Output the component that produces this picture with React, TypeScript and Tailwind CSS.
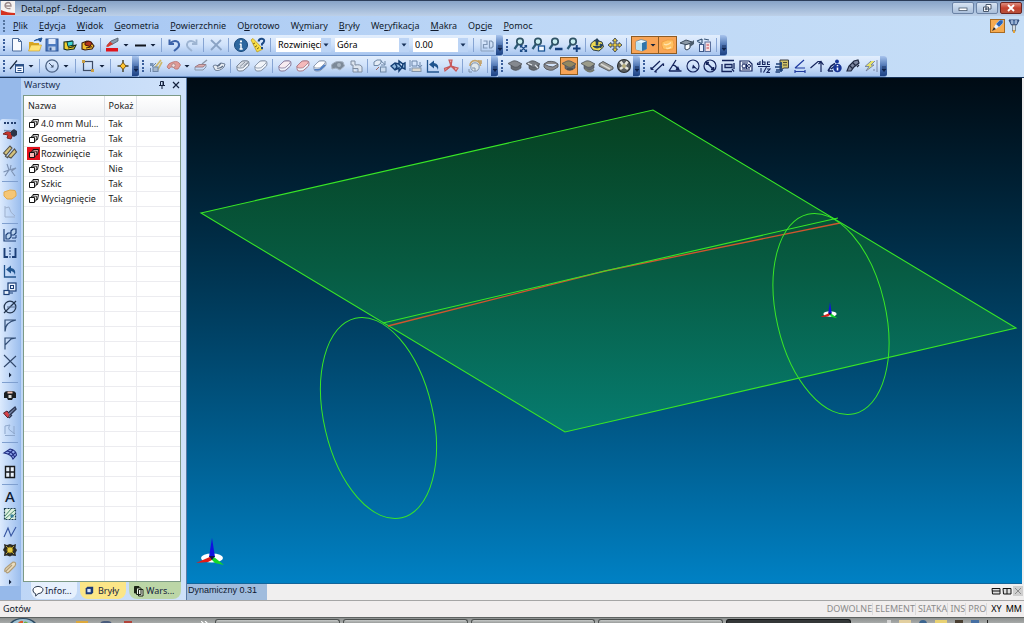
import React from 'react';

type IconDef = React.ReactNode;

const navy = '#1c3f77';
const ink = '#15245c';

const lens = (
  <>
    <path d="M6 7 L2.5 12" stroke="#2b5b78" strokeWidth="2.2" />
    <circle cx="8" cy="4.6" r="3.2" fill="#c9eef0" stroke="#2f5265" strokeWidth="1.7" />
  </>
);

const cap = (fill: string) => (
  <>
    <path d="M4 7 V10.5 Q9 14.5 14 10 V7 Z" fill="#666a70" stroke="#464b52" strokeWidth=".6" />
    <path d="M1 5.5 L6 3 Q8 2.5 10 3.3 L15 6 L10.5 9 Q9 9.6 7 9 Z" fill={fill} stroke="#50555c" strokeWidth=".8" />
  </>
);

const slab = (fill: string, edge: string) => (
  <>
    <path d="M2 8 L6 4 Q7 3 9 3 H12 Q14.5 3 14 6 L13.5 8 L9 12 Q8 13 6 13 H4 Q2 13 2 10.5 Z" fill="#eef3fa" stroke={edge} />
    <path d="M2 8 L6 4 Q7 3 9 3 H12 Q14.5 3 13 5 L9 9 Q8 10 6 10 H4 Q1.5 10 2 8 Z" fill={fill} stroke={edge} strokeWidth=".8" />
  </>
);

const icons: Record<string, IconDef> = {
  new: <path d="M3.5 1.5 H9.5 L12.5 4.5 V14 H3.5 Z M9.5 1.5 V4.5 H12.5" fill="#f8fbff" stroke="#4d6d9c" />,
  open: (
    <>
      <path d="M2 5 H6 L7 6 H12 V13 H2 Z" fill="#d9a520" />
      <path d="M4 8 H14.5 L12.5 14 H1.5 Z" fill="#ffe377" stroke="#c99a1d" strokeWidth=".6" />
      <path d="M7 4 Q10 1 13 3 M11 2 L15 1 L13.5 5 Z" fill="#24579c" stroke="#24579c" />
    </>
  ),
  save: (
    <>
      <rect x="2" y="2" width="12" height="12" fill="#4c7bc0" stroke="#2c5596" />
      <rect x="4.5" y="2" width="7" height="5" fill="#dfeafb" />
      <rect x="4.5" y="9.5" width="7" height="4" fill="#c2d4ec" />
      <rect x="5.5" y="10.5" width="2" height="3" fill="#2c5596" />
    </>
  ),
  insertA: (
    <>
      <path d="M2 5 L10 4 V9 L14 8 L12 12 L5 13 L2 12 Z" fill="#f3cf2c" stroke="#142c1c" strokeWidth="1.1" />
      <path d="M5 5 L11 4 V8 L6 9.5 Z" fill="#42d7d3" stroke="#0c3a33" />
      <path d="M6 11 L12 9.7" stroke="#142c1c" />
    </>
  ),
  insertB: (
    <>
      <path d="M2 6 L7 4 L11 5 L14 9 L12 12 L5 13 L2 12 Z" fill="#f3bd2c" stroke="#3a1c10" strokeWidth="1.1" />
      <path d="M5 5.5 L9 4 L12 6 L10 9.5 L5 8 Z" fill="#b3351d" stroke="#4a130b" />
      <path d="M6 11 L12 9.7" stroke="#3a1c10" />
    </>
  ),
  pen: (
    <>
      <path d="M3 8.5 L7 4 L14 1 V4 L8 7.5 Z" fill="#8a9cb0" stroke="#4f5c6b" strokeWidth=".8" />
      <path d="M2 9.5 L6 4.5 L9 7 L4 10 Z" fill="#d63d31" />
      <rect x="2" y="11" width="12" height="3.5" fill="#e0131c" />
    </>
  ),
  line: <path d="M3 8.5 H14" stroke="#10151c" strokeWidth="1.8" />,
  undo: <path d="M3.5 2.5 V7 H8 M4 6.5 Q8 2.5 12 5 Q14.5 8.5 11 11.5 L8 14" fill="none" stroke="#3c62a8" strokeWidth="2" />,
  redo: <path d="M12.5 2.5 V7 H8 M12 6.5 Q8 2.5 4 5 Q1.5 8.5 5 11.5 L8 14" fill="none" stroke="#9db4d2" strokeWidth="1.8" />,
  cross: <path d="M3 3 L13.5 13 M13 3 L3 13" stroke="#8ba3c4" strokeWidth="1.8" />,
  info: (
    <>
      <circle cx="8" cy="8" r="6.5" fill="#2d679f" stroke="#17477a" />
      <path d="M8 7 V12 M6.7 7.2 H8.5 M6.5 12 H9.7" stroke="#fff" strokeWidth="1.5" />
      <circle cx="8" cy="4.4" r="1.1" fill="#fff" />
    </>
  ),
  help: (
    <>
      <path d="M1 3 L3 1.5 L13 12 L7 15 Z" fill="#f8de45" stroke="#b89519" strokeWidth=".7" />
      <path d="M3 7 L5 6 M5 10 L7 8.6 M7 12 L9 10.5" stroke="#7c6512" />
      <path d="M8.5 4.5 Q9 1.5 12 1.8 Q15.5 2.5 13.5 5.5 L12 7 V8.5 M12 10 V12" fill="none" stroke="#1c4a85" strokeWidth="2" />
    </>
  ),
  twoD: (
    <>
      <path d="M2 2 V14 H15" fill="none" stroke="#8aa0bd" />
      <path d="M4.5 4 H8 V7.5 H4.5 V11 H8.5 M10.5 4 V11 H12.5 L14 9.5 V5.5 L12.5 4 Z" fill="none" stroke="#7f96b5" strokeWidth="1.2" />
    </>
  ),
  zoomFit: <>{lens}<path d="M9 9 L14 14 M14 9 L9 14 M8.5 10.5 V8.5 H10.5 M12.5 8.5 H14.5 V10.5 M14.5 12.5 V14.5 H12.5 M10.5 14.5 H8.5 V12.5" fill="none" stroke="#1d4c86" strokeWidth="1.2" /></>,
  zoomBox: <>{lens}<rect x="8.5" y="9" width="6" height="5" fill="#f5faff" stroke="#1d5696" strokeWidth="1.3" /></>,
  zoomOut: <>{lens}<path d="M8 12 H15.5" stroke="#153f7c" strokeWidth="2.6" /></>,
  zoomIn: <>{lens}<path d="M8 11.5 H15.5 M11.75 8 V15" stroke="#153f7c" strokeWidth="2" /></>,
  orbit: (
    <>
      <path d="M2 6.5 L6 3 L13 5 L14.5 10 L10 14 L4 13 L1.5 9.5 Z" fill="#ecd751" stroke="#2e3f48" />
      <path d="M8 1 L11 4.5 H9.3 V8.5 H6.7 V4.5 H5 Z" fill="#27435c" />
      <path d="M4 9 Q8 13 12 9 M11 7 L14 8 L11.5 11 Z" fill="#27435c" stroke="#27435c" />
    </>
  ),
  pan: (
    <path d="M8 1 L10.5 4 H9 V7 H12 V5.5 L15 8 L12 10.5 V9 H9 V12 H10.5 L8 15 L5.5 12 H7 V9 H4 V10.5 L1 8 L4 5.5 V7 H7 V4 H5.5 Z" fill="#e8c93f" stroke="#37435a" strokeWidth=".9" />
  ),
  cube: (
    <>
      <path d="M3 4.5 L8 2.5 L13.5 4 V12 L9 14 L3 12.5 Z" fill="#e9f8ff" stroke="#537d99" strokeWidth=".7" />
      <path d="M9 6 L13.5 4.2 V12 L9 14 Z" fill="#2f75aa" />
      <path d="M3 4.5 L9 6 V14 L3 12.5 Z" fill="#b9e2f5" />
    </>
  ),
  shade: (
    <>
      <path d="M2 5 Q7 2 13 3 Q15 8 13 12 Q7 14 3 12 Q1 8 2 5 Z" fill="#ffc061" stroke="#ef9f42" />
      <path d="M4 7 Q7 9 11 5.5 M6 11 Q9 12 11 10" stroke="#ffe3ab" strokeWidth="1.3" fill="none" />
    </>
  ),
  viewA: (
    <>
      <path d="M1 6 L7 3 L13 5 L8 8 Z" fill="#8c99a6" stroke="#3c4b5c" />
      <path d="M6 8 L11 6.5 V11 L8 13 L6 12 Z" fill="#fbfdff" stroke="#35465a" />
      <path d="M11 6.5 L15 3 V7 L11 10 Z" fill="#4b5b6c" />
    </>
  ),
  viewB: (
    <>
      <path d="M1 4 L6 2 M1 4 L6 7 M8 2 L13 3 M6 2 V6" stroke="#395678" strokeWidth="1.2" />
      <rect x="3.5" y="7.5" width="4" height="7" fill="#e7efff" stroke="#3d5786" />
      <rect x="9" y="5" width="5.5" height="9.5" fill="#f4dfe3" stroke="#5a6f9b" />
      <path d="M10.5 8 H13 M10.5 11 H13" stroke="#c8424a" />
    </>
  ),
  sketch: (
    <>
      <path d="M1 11 L8 2.5" stroke="#1d2c42" strokeWidth="1.2" />
      <rect x="6.5" y="6.5" width="8" height="8" fill="#f3f8ff" stroke="#2d5288" />
      <path d="M6.5 7.5 H14.5" stroke="#2d5288" strokeWidth="2" />
      <path d="M8.5 10.5 H12.5 M8.5 12.5 H12.5" stroke="#2d5288" />
    </>
  ),
  circle: (
    <>
      <circle cx="8" cy="8" r="6.2" fill="none" stroke="#4b6284" strokeWidth="1.3" />
      <path d="M8 8 L5 5" stroke="#3d4f6b" /><path d="M6.5 9.5 L9.5 6.5 V9.5 Z" fill="#3d4f6b" />
    </>
  ),
  rect: (
    <>
      <rect x="3.5" y="3.5" width="9" height="9" fill="none" stroke="#3d4c66" strokeWidth="1.2" />
      <rect x="2" y="2" width="3" height="3" fill="#c9a047" /><rect x="11" y="11" width="3" height="3" fill="#c9a047" />
    </>
  ),
  point: (
    <>
      <path d="M8 2 V14 M2.5 8 H13.5" stroke="#3f3e28" strokeWidth="1.4" />
      <path d="M8 4.5 L11 8 L8 11.5 L5 8 Z" fill="#ffc42e" stroke="#7e5812" />
    </>
  ),
  surfA: (
    <>
      <path d="M5 12 L13 2 M9 13 L14 4" stroke="#cdb96b" strokeWidth="1.6" />
      <rect x="2" y="5" width="3.5" height="3" fill="#7893b5" /><rect x="5" y="9" width="5" height="4.5" fill="#a4b6cc" stroke="#6f88a8" />
      <path d="M2.5 14 V10 M4 9 L8 5" stroke="#6f88a8" />
    </>
  ),
  surfB: (
    <>
      <path d="M1 9 Q2 5 7 4 Q12 2 14.5 7 L12 11 Q9 12 7 9 Q4 8 3 11 Z" fill="#e09a96" stroke="#b5716f" strokeWidth=".8" />
      <circle cx="7.5" cy="7.5" r="1.8" fill="#f6dfdc" stroke="#aa8a8d" />
    </>
  ),
  surfC: <><path d="M2 9 L6 6.5 H13 L10 9 Z" fill="#dcaeae" stroke="#a07c84" /><path d="M9 6 L14 2" stroke="#8b97a8" strokeWidth="1.5" /><path d="M2 9 V12 H10 L13 9 V6.5" fill="none" stroke="#8b97a8" /></>,
  surfD: <><path d="M2 8 L4 12 Q8 14 13 9 L14 6 L10 5 L8 8 L4 7 Z" fill="#e8edf3" stroke="#6e7f97" /><path d="M6 8.5 L10 5 M6 10 Q9 11 12 8" stroke="#5e6f87" strokeWidth="1.2" fill="none" /></>,
  solidA: <>{slab('#d9dee6', '#75808f')}<path d="M5 8.5 L10 4 M8.5 8 L12.5 4.5" stroke="#75808f" strokeWidth=".8" /></>,
  solidB: slab('#f1f4f9', '#8390a4'),
  solidC: slab('#f7ecf0', '#86789a'),
  solidD: slab('#f4b9ba', '#a77785'),
  solidE: <>{slab('#fdfdff', '#8492a8')}<path d="M2.5 11.5 Q6 12.5 8.5 11 L13 7" fill="none" stroke="#4c7cc4" strokeWidth="1.8" /></>,
  solidF: <><path d="M1.5 7 Q5 2 13 4 L14.5 8 L10 12 L6 10 L2 11 Z" fill="#7c8998" stroke="#a3afbf" /><circle cx="9" cy="7" r="2" fill="#a8b4c1" /></>,
  solidG: <path d="M3 3 H7 V7 Q13 6 14 9 V14 H10 V10.5 H5 V7 H3 Z M5 10 V14 H10" fill="#dde5ef" stroke="#7e8ca0" />,
  moveA: <><path d="M2 4 L5 2 H9 V5 L6 7.5 H2 Z" fill="#e4ecf6" stroke="#6f88a6" /><path d="M9 3 L13 6.5 M13 3 V7 H9" fill="none" stroke="#6f88a6" /><rect x="8.5" y="9" width="5.5" height="5" fill="#cbdcf0" stroke="#6f88a6" /><path d="M4 12 L7 9" stroke="#a4685c" /></>,
  moveB: <path d="M1 8 L5 5 L9 6 V3 L13 6 L15 5 V11 L12 9.5 L9 13 V10 L5 12 Z M5 5 L7 9 L5 12 M9 6 L12 9.5 L13 6" fill="#8fb8df" stroke="#133d72" strokeWidth="1.4" />,
  moveC: <><path d="M3 2 V9 M5 3 H10 V8 H5 Z" fill="none" stroke="#6c87aa" /><path d="M3 13 V10 M13 4 V9 M11 7 L13 9.5 L15 7" fill="none" stroke="#6c87aa" /><rect x="5" y="10" width="9" height="3.5" fill="#ddd8cd" stroke="#8294aa" /></>,
  rotate: <><path d="M2.5 2 V14 H14" fill="none" stroke="#23558f" strokeWidth="1.3" /><path d="M4 6.5 L9 2.5 V5 Q14.5 6 13 12 Q12 8.5 9 8 V10.5 Z" fill="#20558f" /></>,
  axis: (
    <>
      <path d="M8 8 L6 2 L9 2 Z M8 8 L2 13 L1.5 10.5 Z M8 8 L15 10 L13 13 Z" fill="#efaeac" stroke="#c65a5c" strokeWidth="1.2" />
      <path d="M8 8 L8 4 M8 8 L4 11 M8 8 L12 10.5" stroke="#c65a5c" strokeWidth="1.5" />
    </>
  ),
  rotCopy: <><path d="M3 8 Q3 3 8 2.5 Q13 3 13.5 8 M11 3 H14 V6" fill="none" stroke="#c4a36c" strokeWidth="1.7" /><circle cx="8" cy="9" r="4.2" fill="#e1e8ec" stroke="#7d90aa" /><path d="M5 10 H8 V13 M2 11 V14 H5" fill="none" stroke="#7d90aa" /></>,
  capA: cap('#85898f'),
  capB: <>{cap('#777c83')}<path d="M3 5.2 L7 7 M10 7 L13 10" stroke="#dfe4ea" strokeWidth="1.2" /></>,
  capC: <path d="M1 6 L5 3.5 Q8 3 12 4 L15 6 V9 L10 12 Q7 13 3 11 L1 9 Z M1 6 Q6 9 10 9 L15 6" fill="#8b8a8d" stroke="#54575e" strokeWidth=".9" />,
  capD: <>{cap('#94875f')}<path d="M6 11 H12" stroke="#3f3d35" strokeWidth="1.2" /></>,
  capE: <>{cap('#9b9b8a')}<path d="M5 11 Q10 15.5 14 11.5" fill="none" stroke="#74776c" strokeWidth="2" /></>,
  bar: <><path d="M1 6 L5 3.5 L15 9 V11 L11 13 L1 8 Z" fill="#9b9b96" stroke="#575b60" /><path d="M3 6.2 L12 11" stroke="#d9d9d5" strokeWidth="1.5" /></>,
  wheel: <><circle cx="8" cy="8" r="6.5" fill="#5c5f60" stroke="#2b2e31" strokeWidth="1.1" /><path d="M4.5 3.5 L7 7 M11.5 3.5 L9 7 M4 11 L7 9 M12 11 L9 9" stroke="#e6e6df" strokeWidth="2.6" /><circle cx="8" cy="8" r="2" fill="#b7ae7c" /></>,
  dimLen: <path d="M2 11.5 L11 3 M5.5 14 L14.5 5.5 M2 11.5 V9 M2 11.5 H4.5 M5.5 14 H8 M14.5 5.5 V8" stroke={ink} strokeWidth="1.2" fill="none" />,
  dimAng: <><path d="M2 13 L9 2 M2 13 H14.5 M6 7 Q10 8 10.5 12" fill="none" stroke={ink} strokeWidth="1.3" /><path d="M11 8 L13 12.5 L8.5 12 Z" fill={ink} /></>,
  dimRad: <><circle cx="8" cy="8" r="6" fill="none" stroke={ink} strokeWidth="1.1" /><path d="M8 8 L13 12" stroke={ink} /><path d="M8 6.5 L11 10 L7 10.5 Z" fill={ink} /></>,
  dimDia: <><circle cx="8" cy="8" r="6" fill="none" stroke={ink} strokeWidth="1.2" /><path d="M4 4 L12 12 M4.5 7 V4.5 H7 M11.5 9 V11.5 H9" fill="none" stroke={ink} strokeWidth="1.5" /></>,
  dimOrd: <path d="M2 2.5 H14 M2 6 V13.5 H12 M5 6.5 H12 V9.5 H5 Z M14 5 V11 M12 11 L14 13.5" fill="none" stroke={ink} strokeWidth="1.3" />,
  dimTol: <><path d="M2 3 H11 L14 6 V13 H2 Z" fill="#eef4ff" stroke={ink} strokeWidth="1.2" /><circle cx="6" cy="8" r="2" fill="none" stroke={ink} /><circle cx="11" cy="8" r="1.5" fill="none" stroke={ink} /><path d="M4 5 H10 M4 11 H12 M8.5 6 V11" stroke={ink} /></>,
  dimText: <path d="M1.5 5 H4 V3 M4 3 V6.5 H1.5 V5 M6.5 1.5 V6.5 H9 V4 H7 M14 4 H11.5 V6.5 H14 M2 8.5 H14 M5 10 V14.5 M7.5 14.5 L10.5 9 M11 11 H14 L11 14.5 H14" fill="none" stroke={ink} strokeWidth="1.1" />,
  dimNote: <><path d="M6 2 H14.5 V10 H10 L6 12 Z" fill="#cfc067" stroke="#3b3c45" /><path d="M9 4.5 H13 M9 7 H13" stroke="#4c4a35" /><path d="M2 6 H8 M1 9 H8 M2 12 H9 M7 4 V14 M1.5 14 H6" stroke={navy} strokeWidth="1.6" /></>,
  dimSlope: <path d="M3 10 L12 2 M3 10 H13 M3 12 V15 M13 12 V15 M3 13.5 H13" stroke="#203ba0" strokeWidth="1.2" fill="none" />,
  dimPeak: <path d="M1.5 10 L9 3.5 H12 V14 M9.5 6 L12 3.5 L14.5 7" fill="none" stroke={ink} strokeWidth="1.2" />,
  dimInfo: <><path d="M1 13 L4 8 L8 5.5 M1 13 H6 M4 11 L8 8" stroke={ink} strokeWidth="1.5" fill="none" /><circle cx="10.5" cy="10" r="4.2" fill="#173495" /><path d="M10.5 9.5 V12.5 M10.5 7 V8.2" stroke="#fff" strokeWidth="1.6" /><circle cx="10" cy="3.5" r="1.9" fill="#173495" /></>,
  dimBrush: <path d="M2 13 L4 8 L9 3 L13 2 L14 5 L9 9 L6 13 Z M5 8 L8 11 M8 5 L11 8 M12 9 L14 7" fill="#7c86a0" stroke="#202942" strokeWidth="1.2" />,
  bolt: <path d="M8 3 L2 8.5 H6 L3 13 L11 7 H8 L12 3 M14 2 V14 M10 12 H12" fill="#e6e26b" stroke="#727fa0" strokeWidth=".9" />,
  mill: <><path d="M1 8 L6 5 L11 8 L9 13 L5 12 L6 9 Z" fill="#c7332b" stroke="#7c2822" /><path d="M9 5 L12 3 L15 5 V9 L12 11 L9 9 Z" fill="#2b3548" /><path d="M2 4.5 L9 5" stroke="#7690b5" strokeWidth="1.5" /></>,
  pencilPair: <path d="M1.5 9 L8 2 L10 4 L4 11.5 Z M6 12.5 L12.5 5 L14.5 8 L9 14 Z M3 12 L6 14" fill="#d5c27b" stroke="#53514a" strokeWidth="1.1" />,
  star: <path d="M5 2 L7 8 L14 6 L9.5 9 L13 14 M7 8 L1.5 10 M7 8 L3 14 M9 3 L8 8" fill="none" stroke="#7d92b3" strokeWidth="1.1" />,
  blob: <path d="M2 6 L8 4 L13 4.5 L14 7 V10 L10 13 H5 L2 10 Z" fill="#f5c675" stroke="#e0aa4e" />,
  spline: <path d="M3 2 V13 H13 M3 4 L7 3 Q8 9 13 12" fill="none" stroke="#9eb1ce" />,
  copyRot: <><path d="M2 2 V14 H14" fill="none" stroke={navy} strokeWidth="1.2" /><path d="M4 8 L6 6 H9 V10 L7 12 H4 Z M9 4 L11 2 H14 V6 L12 8 H9 Z" fill="#bad3ee" stroke={navy} strokeWidth="1.2" /><path d="M10 11 H14 V8" fill="none" stroke={navy} /></>,
  mirror: <><path d="M2.5 3 V12 H6 M13.5 3 V12 H10" fill="none" stroke={navy} strokeWidth="1.9" /><path d="M8 2 V14" stroke={navy} strokeDasharray="2 1" /></>,
  scale: <><rect x="6" y="2" width="8" height="8" fill="#eaf2fc" stroke={navy} strokeWidth="1.2" /><rect x="8.5" y="4.5" width="3" height="3" fill="none" stroke={navy} /><rect x="2" y="9.5" width="5" height="4" fill="#eaf2fc" stroke={navy} strokeWidth="1.2" /><path d="M7 12 H11" stroke={navy} /></>,
  trimCircle: <><circle cx="8" cy="8" r="5.8" fill="none" stroke="#24364f" strokeWidth="1.3" /><path d="M2 14 L14 2" stroke="#24364f" strokeWidth="1.2" /><path d="M5 8 H14" stroke="#5a6f90" /></>,
  fillet: <path d="M3 14.5 Q3 5 14 3 M3 14 V3 H14" fill="none" stroke="#314d75" strokeWidth="1.2" />,
  chamfer: <path d="M3 14.5 V10 L9 4 L14 3 M3 10 V3 H14" fill="none" stroke="#314d75" strokeWidth="1.2" />,
  cut: <path d="M2 2 L14 14 M14 3 L2 14" stroke="#31476a" strokeWidth="1.1" />,
  vise: <><path d="M2 6 Q3 4 6 4 H10 Q13 4 14 6 V11 H11 L10 13 H6 L5 11 H2 Z" fill="#1b1e20" /><rect x="5.5" y="4.5" width="5" height="2" fill="#f0c2b3" /><path d="M6.5 8 H9.5 V11 H6.5 Z" fill="#dcdcd8" /></>,
  spray: <><path d="M1.5 8 L5 6 L8 9 L6 13 L4 11 Z" fill="#d8434a" stroke="#552733" /><path d="M6 8 L13 2 L14 4 L8 10 M10 10 L7 13" stroke="#2a3450" strokeWidth="1.4" fill="#7686a8" /></>,
  wave: <path d="M3 12 V4 L8 3 Q5 7 9 9 L13 12 M12 4 V12 M3 13.5 H13" fill="none" stroke="#8fa8cc" />,
  mesh: <path d="M2 7 L8 3 Q14 4 14.5 9 L11 13 Q9 8 2 7 Z M5 5 Q11 6 12.5 11 M11 4 L6.5 8 M13.5 6.5 L9.5 10" fill="#91a8ee" stroke="#202d80" strokeWidth="1.1" />,
  grid: <path d="M3.5 2.5 H12.5 V13.5 H3.5 Z M8 2.5 V13.5 M3.5 8 H12.5" fill="#eaf2fc" stroke="#17191c" strokeWidth="1.4" />,
  hatch: <><rect x="2.5" y="2.5" width="11" height="11" fill="#dff0e0" stroke="#1e4154" strokeWidth="1.2" strokeDasharray="2 1" /><path d="M3 10 L9 3 M3 13 L13 4 M8 13 L13 8" stroke="#4b8b6b" /><rect x="8.5" y="8.5" width="3" height="3" fill="#357b9b" /></>,
  polyline: <path d="M2 13 L6 4 L9 12 L14 3" fill="none" stroke="#3453a0" strokeWidth="1.1" />,
  gear: <><path d="M2 2 L5 3 L8 2 L11 3 L14 2 L13.5 6 L15 8 L13.5 11 L14 14 L10 13.5 L8 14.5 L5 13.5 L2 14 L2.5 10 L1 8 L2.5 5 Z" fill="#2b2b26" /><path d="M4 4 L6 6 M12 4 L10 6 M4 12 L6 10 M12 12 L10 10" stroke="#b9a53d" /><circle cx="8" cy="8" r="3" fill="#e4ca42" stroke="#8b7618" /></>,
  clip: <path d="M3 12 Q2 9 5 7 L11 2 Q15 2 13 6 L7 12 Q4 14 4 11 L10 5" fill="#eaddbf" stroke="#b09d78" strokeWidth="1.2" />,
};

function Glyph({ name }: { name: string }) {
  return (
    <svg viewBox="0 0 16 16" fill="none" className="h-4 w-4" aria-hidden="true">
      {icons[name]}
    </svg>
  );
}

function Items({ list, vertical = false }: { list: string; vertical?: boolean }) {
  return (
    <>
      {list.split(' ').map((n, i) => {
        if (n === '|')
          return vertical ? (
            <span key={i} className="flex h-1 w-4 shrink-0 items-center"><span className="h-px w-full bg-[#7f9fcf]" /></span>
          ) : (
            <span key={i} className="flex w-[5px] shrink-0 justify-center"><span className="h-3.5 w-px bg-[#86a4d3]" /></span>
          );
        if (n === 'v' || n === '>')
          return (
            <button key={i} type="button" aria-label="Więcej" className="flex h-2 w-2 shrink-0 items-center justify-center">
              <svg viewBox="0 0 8 8" className="h-2 w-2">
                <path d={n === 'v' ? 'M1.5 3 H6.5 L4 5.5 Z' : 'M3 1.5 V6.5 L5.5 4 Z'} fill="#10203c" />
              </svg>
            </button>
          );
        return (
          <button key={i} type="button" aria-label={n} className="flex h-4 w-4 shrink-0 items-center justify-center">
            {n === 'A' ? <span className="text-[15px] leading-4 font-medium text-[#101c33]">A</span> : <Glyph name={n} />}
          </button>
        );
      })}
    </>
  );
}

function Bar({ children, width }: { children: React.ReactNode; width: string }) {
  return (
    <div className={`flex h-full shrink-0 overflow-hidden rounded-r-[3px] border-b border-[#6f93c8] bg-linear-to-b from-[#e2eefd] via-[#cfe1fa] to-[#a6c4ee] ${width}`}>
      <div className="flex w-2 shrink-0 items-center justify-center">
        <span className="h-3 w-0 border-l-2 border-dotted border-[#3b5f9c]" />
      </div>
      <div className="flex min-w-0 flex-1 items-center justify-between px-px">{children}</div>
      <div className="flex w-[7px] shrink-0 items-end justify-center bg-linear-to-b from-[#a9c5ee] via-[#4f76b4] to-[#1d4284] pb-1">
        <svg viewBox="0 0 6 6" className="h-[6px] w-[6px]"><path d="M1 1 H5 M1 3 H5 L3 5.5 Z" stroke="#0c2048" fill="#0c2048" strokeWidth=".8" /></svg>
      </div>
    </div>
  );
}

function Combo({ label, value, width }: { label: string; value: string; width: string }) {
  return (
    <label className={`grid h-3.5 shrink-0 items-center bg-white ${width}`}>
      <select aria-label={label} className="col-start-1 row-start-1 h-3.5 w-full appearance-none overflow-hidden bg-white pr-2 pl-[2px] text-[9px] leading-[14px] text-clip whitespace-nowrap text-black outline-none">
        <option>{value}</option>
      </select>
      <span className="pointer-events-none col-start-1 row-start-1 flex h-3.5 w-2.5 items-center justify-center justify-self-end bg-[#bcd4f5]">
        <svg viewBox="0 0 8 8" className="h-2 w-2"><path d="M1.5 2.5 H6.5 L4 5.5 Z" fill="#173058" /></svg>
      </span>
    </label>
  );
}

const menus: [string, string, string][] = [
  ['', 'P', 'lik'], ['', 'E', 'dycja'], ['', 'W', 'idok'], ['', 'G', 'eometria'], ['', 'P', 'owierzchnie'], ['O', 'b', 'rotowo'],
  ['W', 'y', 'miary'], ['', 'B', 'ryły'], ['We', 'r', 'yfikacja'], ['', 'M', 'akra'], ['Op', 'c', 'je'], ['', 'P', 'omoc'],
];

const layers: [string, string][] = [
  ['4.0 mm Mul...', 'Tak'], ['Geometria', 'Tak'], ['Rozwinięcie', 'Tak'], ['Stock', 'Nie'], ['Szkic', 'Tak'], ['Wyciągnięcie', 'Tak'],
];

function LayerIcon({ active }: { active: boolean }) {
  const fill = active ? '#f6b9b6' : '#fff';
  return (
    <svg viewBox="0 0 13 13" className={`h-[13px] w-[13px] shrink-0 ${active ? 'bg-[#e3101b]' : ''}`}>
      <path d="M6 2.5 H11.5 L10.5 7.5 H5.5 Z" fill={fill} stroke="#111" />
      <path d="M4.5 4.2 H9.5 L9 9 H4 Z" fill={fill} stroke="#111" strokeWidth=".8" />
      <path d="M2.5 5.5 H7.5 V10.5 H2.5 Z" fill={fill} stroke="#111" />
    </svg>
  );
}

function LayersPanel() {
  return (
    <aside className="flex min-h-0 w-[165px] shrink-0 flex-col bg-linear-to-r from-[#bed6f6] to-[#cfe2fa] pr-[5px] pl-[2px]">
      <header className="flex h-[17px] shrink-0 items-center pb-[3px] pl-px">
        <h2 className="flex-1 text-[9px] leading-3 text-[#182c50]">Warstwy</h2>
        <button type="button" aria-label="Przypnij" className="mr-1 h-[10px] w-[10px]">
          <svg viewBox="0 0 10 10"><path d="M3.5 1.5 H6.5 V5.5 M3.5 1.5 V5.5 M2 5.5 H8 M5 5.5 V9 M6 2 V5" fill="none" stroke="#14233f" /></svg>
        </button>
        <button type="button" aria-label="Zamknij panel" className="h-[10px] w-[10px]">
          <svg viewBox="0 0 10 10"><path d="M2 2 L8 8 M8 2 L2 8" stroke="#14233f" strokeWidth="1.2" /></svg>
        </button>
      </header>
      <div className="min-h-0 flex-1 overflow-hidden border border-[#7d9a86] bg-white">
        <table className="w-full table-fixed border-collapse text-left text-[9px] text-[#1c1c1c]">
          <colgroup><col className="w-[80px]" /><col className="w-8" /><col /></colgroup>
          <thead>
            <tr className="h-5 bg-linear-to-b from-white to-[#f1f2f4]">
              <th className="border-r border-b border-[#dcdfe4] p-0 pl-1 font-normal">Nazwa</th>
              <th className="border-r border-b border-[#dcdfe4] p-0 pl-1 font-normal">Pokaż</th>
              <th className="border-b border-[#dcdfe4] p-0" />
            </tr>
          </thead>
          <tbody>
            {layers.map(([name, show], i) => (
              <tr key={name} className="h-[15px]">
                <td className="border-r border-b border-[#ececf0] p-0 pl-[3px]">
                  <span className="flex h-3.5 items-center gap-px whitespace-nowrap leading-3"><LayerIcon active={i === 2} />{name}</span>
                </td>
                <td className="border-r border-b border-[#ececf0] p-0 pl-1 leading-3">{show}</td>
                <td className="border-b border-[#ececf0] p-0" />
              </tr>
            ))}
            {Array.from({ length: 40 }, (_, i) => (
              <tr key={i} className="h-[15px]">
                <td className="border-r border-b border-[#ececf0] p-0" />
                <td className="border-r border-b border-[#ececf0] p-0" />
                <td className="border-b border-[#ececf0] p-0" />
              </tr>
            ))}
          </tbody>
        </table>
      </div>
      <nav className="flex h-[18px] shrink-0 items-start gap-[3px] pl-2 text-[9px] text-[#16233c]">
        <button type="button" className="flex h-[17px] w-[46px] items-center gap-px rounded-b-lg bg-[#e6f0fd] pl-px">
          <svg viewBox="0 0 13 13" className="h-3 w-3 shrink-0"><path d="M4 9.5 Q1 8.5 1 5.5 Q1.5 2 6.5 1.5 Q12 2 12 5.5 Q11 9.5 6.5 9.5 L4 12 Z" fill="#fff" stroke="#1d2a40" /></svg>
          Infor...
        </button>
        <button type="button" className="flex h-[17px] w-[46px] items-center gap-1 rounded-b-lg bg-[#fbe687] pl-1">
          <svg viewBox="0 0 12 12" className="h-[10px] w-[10px] shrink-0"><path d="M2 3 L4 1 H11 V8 L9 10 H2 Z" fill="#1c3a78" /><rect x="4" y="3.5" width="4" height="4" fill="#d8e6fb" /></svg>
          Bryły
        </button>
        <button type="button" className="flex h-[17px] flex-1 items-center gap-px rounded-b-lg bg-[#bcd6a7] pl-1">
          <svg viewBox="0 0 12 12" className="h-3 w-3 shrink-0"><path d="M1.5 1.5 H6 V8 H1.5 Z" fill="#1c2416" stroke="#1c2416" /><path d="M3.5 3 H8 V9.5 H3.5 Z M5.5 4.5 H10 V11 H5.5 Z" fill="#eef3ea" stroke="#1c2416" /></svg>
          Wars...
        </button>
      </nav>
    </aside>
  );
}

function Triad({ x, y, k }: { x: number; y: number; k: number }) {
  return (
    <g transform={`translate(${x} ${y}) scale(${k})`}>
      <ellipse cx="0" cy="0" rx="11" ry="4.5" fill="#fff" />
      <path d="M-3 -1 L0 -20 L3 -1 Z" fill="#1012e0" />
      <path d="M0 -2 L-16 5 L-4 4 L2 1 Z" fill="#e21c17" />
      <path d="M2 -1 L12 7 L3 5 L-1 1 Z" fill="#17d928" />
      <path d="M-3 -2 H3 L0 2 Z" fill="#0b164e" />
    </g>
  );
}

function Viewport() {
  return (
    <div className="mr-[2px] min-h-0 flex-1 overflow-hidden border-b border-[#12659a] bg-linear-to-b from-[#000b14] to-[#0081c4]">
      <svg viewBox="187 78 835 505" className="h-full w-full" fill="none">
        <defs>
          <linearGradient id="plane" gradientUnits="userSpaceOnUse" x1="0" y1="110" x2="0" y2="432">
            <stop offset="0" stopColor="#064020" />
            <stop offset=".5" stopColor="#075c43" />
            <stop offset="1" stopColor="#067c70" />
          </linearGradient>
        </defs>
        <path d="M201 213 L653 110 L1016 328 L565 432 Z" fill="url(#plane)" stroke="#38e626" strokeWidth="1.1" />
        <path d="M388 326 L605 271 L840 223" stroke="#d0552e" strokeWidth="1.3" />
        <path d="M383 323 L605 271 L838 218" stroke="#38e626" strokeWidth="1.1" />
        <ellipse cx="378.5" cy="418" rx="54.5" ry="102.5" transform="rotate(-13.1 378.5 418)" stroke="#38e626" />
        <ellipse cx="831" cy="314" rx="54.5" ry="102.5" transform="rotate(-13.1 831 314)" stroke="#38e626" />
        <Triad x={212} y={558} k={1} />
        <Triad x={830} y={314} k={0.6} />
      </svg>
    </div>
  );
}

function TaskButton({ dot }: { dot: string }) {
  return (
    <div className="flex h-full min-w-0 justify-start overflow-hidden rounded-t-[3px] border border-b-0 border-[#4c504f] bg-linear-to-b from-[#c5c8c7] to-[#8b8e8d] pt-1 pl-3">
      <span className={`h-2 w-2 rounded-full ${dot}`} />
    </div>
  );
}

export default function App() {
  return (
    <div className="flex h-screen flex-col overflow-hidden bg-[#bdd7f5] font-['Noto_Sans','Open_Sans',sans-serif] text-[9px] text-[#101a2c]">
      <header className="flex h-4 shrink-0 items-start border-t border-[#2b3c58] bg-linear-to-b from-[#87a3c7] to-[#bdd0e8] pr-[2px] pl-px">
        <svg viewBox="0 0 14 14" className="h-[14px] w-[14px] shrink-0">
          <rect width="14" height="14" fill="#f5f2f1" />
          <path d="M4 5 H10 Q10 1.5 7 1.5 Q4 2 4 5 Q4.5 8 9.5 7.5" fill="none" stroke="#9c8c8d" strokeWidth="1.3" />
          <path d="M0 9 Q6 12 14 12 V14 H0 Z" fill="#d5321f" />
        </svg>
        <h1 className="flex-1 pl-1.5 text-[9px] leading-[15px] text-[#0b1424]">Detal.ppf - Edgecam</h1>
        <div className="flex gap-[2px] pt-px">
          <button type="button" aria-label="Minimalizuj" className="flex h-3 w-[22px] items-center justify-center rounded-[2px] border border-[#6b83a6] bg-linear-to-b from-[#d7e3f2] to-[#a9bfdb]">
            <svg viewBox="0 0 10 8" className="h-2 w-[10px]"><rect x="1" y="4" width="8" height="2.6" fill="#fff" stroke="#48576c" strokeWidth=".8" /></svg>
          </button>
          <button type="button" aria-label="Przywróć" className="flex h-3 w-[22px] items-center justify-center rounded-[2px] border border-[#6b83a6] bg-linear-to-b from-[#d7e3f2] to-[#a9bfdb]">
            <svg viewBox="0 0 10 10" className="h-[10px] w-[10px]"><path d="M4 1.5 H9 V6 H4 Z M1.5 4 H6.5 V8.5 H1.5 Z M3.3 5.8 H4.7 V6.8 H3.3 Z" fill="#fff" stroke="#48576c" /></svg>
          </button>
          <button type="button" aria-label="Zamknij" className="flex h-3 w-[22px] items-center justify-center rounded-[2px] border border-[#6c2520] bg-linear-to-b from-[#dd8b7c] via-[#c4402d] to-[#b5503b]">
            <svg viewBox="0 0 10 8" className="h-2 w-[10px]"><path d="M2 1 L8 7 M8 1 L2 7" stroke="#fff" strokeWidth="1.9" /></svg>
          </button>
        </div>
      </header>

      <div className="flex shrink-0 flex-col border-b border-[#163258] bg-linear-to-r from-[#a3c4f2] via-[#bdd7f6] to-[#c6def7]">
        <div className="flex h-[19px] items-center pr-[3px]">
          <span className="ml-[3px] h-3 w-0 border-l-2 border-dotted border-[#54749f]" />
          <nav className="flex flex-1 gap-[11px] pl-2 leading-3">
            {menus.map(([a, b, c]) => (
              <button key={a + b + c} type="button">{a}<span className="underline">{b}</span>{c}</button>
            ))}
          </nav>
          <button type="button" aria-label="Szkic" className="h-[14px] w-[15px] border border-[#a86a22] bg-[#f6ab50]">
            <svg viewBox="0 0 13 12" className="h-3 w-[13px]"><path d="M1 11 L3 7 L5 9 Z" fill="#2a2c35" /><path d="M3 7 L5 4 L8 6.5 L5 9 Z" fill="#e9f2fd" /><path d="M5 4 L9 0 H12 V3 L8 7 Z" fill="#2b63b5" stroke="#9cc2ee" strokeWidth=".7" /></svg>
          </button>
          <button type="button" aria-label="Narzędzia" className="ml-[2px] h-[14px] w-[14px]">
            <svg viewBox="0 0 14 14"><path d="M2 1 H12 L9.5 6 H4.5 Z" fill="#5e7fae" stroke="#2b4270" /><path d="M5 1 V5 M9 1 V5" stroke="#d7e6fa" /><rect x="5.5" y="6" width="3" height="6" fill="#d3dae2" stroke="#5a6573" strokeWidth=".7" /><rect x="6" y="11" width="2" height="3" fill="#e0a13b" /></svg>
          </button>
        </div>
        <div className="flex h-[21px] shrink-0">
          <Bar width="w-[503px]">
            <div className="flex w-[264px] items-center justify-between">
              <Items list="new open save insertA insertB | pen v line v | undo redo | cross | info help |" />
            </div>
            <div className="flex items-center gap-1">
              <Combo label="Warstwa" value="Rozwinięcie" width="w-[55px]" />
              <Combo label="Widok" value="Góra" width="w-[74px]" />
              <Combo label="Poziom" value="0.00" width="w-[55px]" />
            </div>
            <Items list="| twoD" />
          </Bar>
          <Bar width="w-[224px]">
            <Items list="zoomFit zoomBox zoomOut zoomIn | orbit pan |" />
            <div className="flex h-[18px] items-center">
              <div className="flex h-[18px] w-7 items-center justify-center border border-[#8f5c23] bg-[#f8a456]"><Items list="cube v" /></div>
              <div className="flex h-[18px] w-[18px] items-center justify-center border border-l-0 border-[#8f5c23] bg-[#f8a456]"><Items list="shade" /></div>
            </div>
            <Items list="viewA viewB |" />
          </Bar>
        </div>
        <div className="flex h-[21px] shrink-0">
          <Bar width="w-[139px]"><Items list="sketch v | circle v | rect v | point" /></Bar>
          <Bar width="w-[359px]">
            <Items list="surfA surfB v surfC surfD | solidA solidB | solidC solidD solidE solidF solidG | moveA moveB moveC rotate axis | rotCopy |" />
          </Bar>
          <Bar width="w-[142px]">
            <Items list="capA capB capC" />
            <div className="flex h-[18px] w-[18px] items-center justify-center border border-[#8f5c23] bg-[#f8a456]"><Items list="capD" /></div>
            <Items list="capE bar wheel" />
          </Bar>
          <Bar width="w-[247px]">
            <Items list="dimLen dimAng dimRad dimDia dimOrd dimTol dimText dimNote dimSlope dimPeak dimInfo dimBrush bolt" />
          </Bar>
        </div>
      </div>

      <main className="flex min-h-0 flex-1">
        <div className="flex w-[21px] shrink-0 flex-col bg-[#96b9ea] pt-[41px] pb-[14px]">
          <div className="flex min-h-0 w-5 flex-1 flex-col items-center justify-between rounded-t-[3px] bg-linear-to-r from-[#dceafd] to-[#9dbfee]">
            <span className="mt-[3px] h-0 w-3 border-t-2 border-dotted border-[#24406f]" />
            <Items vertical list="mill pencilPair star | blob spline | copyRot mirror rotate scale trimCircle fillet chamfer cut > | vise spray wave | mesh grid | A hatch polyline gear clip >" />
          </div>
        </div>
        <LayersPanel />
        <section className="flex min-w-0 flex-1 flex-col border-l border-[#5a7aa6] bg-[#f0efef]">
          <Viewport />
          <div className="flex h-4 shrink-0 items-start justify-between pr-px">
            <span className="h-4 w-20 bg-[#a0bcdd] pl-px font-['Liberation_Sans',sans-serif] leading-3 text-[#0f1830]">Dynamiczny 0.31</span>
            <div className="flex gap-px pt-[2px]">
              <svg viewBox="0 0 10 10" className="h-[10px] w-[10px]"><path d="M1 2.5 H9 V8 H1.5 Z M1 5 H9" fill="#ddd" stroke="#111" /></svg>
              <svg viewBox="0 0 10 10" className="h-[10px] w-[10px]"><path d="M1 2.5 H9 V8 H1.5 Z M5 2.5 V8" fill="#ddd" stroke="#111" /></svg>
              <svg viewBox="0 0 10 10" className="h-[10px] w-[10px]"><rect width="10" height="10" fill="#cfcfcf" /><path d="M2 2 L8 8 M8 2 L2 8" stroke="#8b8b8b" /></svg>
            </div>
          </div>
        </section>
      </main>

      <footer className="shrink-0">
        <div className="flex h-[17px] items-center border-t border-[#a5a5a5] bg-[#f1eeee] pr-[2px] pl-[3px] leading-3">
          <span className="flex-1">Gotów</span>
          <div className="flex text-[#8b8b8b]">
            {['DOWOLNE', 'ELEMENT', 'SIATKA', 'INS', 'PRO'].map((t) => (
              <span key={t} className="border-r border-[#dcdada] pl-[2px]">{t}</span>
            ))}
            <span className="pl-1 text-black">XY</span>
            <span className="pl-1 text-black">MM</span>
          </div>
        </div>
        <div className="flex h-[6px] overflow-hidden border-t border-[#5f6362] bg-linear-to-b from-[#8e9190] to-[#a7aaa9]">
          <div className="flex w-[215px] shrink-0 items-start pl-2">
            <svg viewBox="0 0 30 8" className="h-2 w-[30px]"><path d="M0 8 Q4 0 15 0 Q26 0 30 8 Z" fill="#2c4a62" /><path d="M2 8 Q6 1 15 1 Q24 1 28 8 Z" fill="#9fc1d2" /><path d="M8 8 Q11 2 15 3 V8 Z" fill="#dd5a2b" /><path d="M16 4 Q19 2 22 8 H16 Z" fill="#6fae45" /></svg>
            <div className="flex flex-1 justify-around pt-[3px] pl-8">
              <span className="h-2 w-3 bg-[#dca83c]" /><span className="h-2 w-3 rounded-full bg-[#4a5c7c]" /><span className="h-2 w-2 bg-[#b2443b]" />
              <span className="w-4" /><span className="w-4" />
              <svg viewBox="0 0 8 4" className="h-1 w-2"><path d="M0 0 L3 3 M4 0 L7 3" stroke="#fff" strokeWidth="1.2" /></svg>
            </div>
          </div>
          <div className="grid w-[636px] shrink-0 grid-cols-5 gap-[3px] pt-px">
            <TaskButton dot="bg-[#5a5e68]" />
            <TaskButton dot="bg-[#5a5e68]" />
            <TaskButton dot="bg-[#e6dd7f]" />
            <TaskButton dot="bg-[#5a5e68]" />
            <div className="h-full rounded-t-[3px] border border-b-0 border-[#17191a] bg-[#343738]" />
          </div>
          <div className="flex flex-1 items-start justify-center gap-2 pt-[2px]">
            <span className="h-2 w-1 bg-[#d2d2d2]" /><span className="h-2 w-3 bg-[#e2cfa0]" /><span className="h-2 w-2 rounded-full bg-[#3c658f]" />
            <span className="h-2 w-3 bg-[#e8d173]" /><span className="h-2 w-2 bg-[#4a3f32]" /><span className="h-2 w-2 bg-[#466fa3]" /><span className="h-2 w-px bg-[#222]" />
          </div>
        </div>
      </footer>
    </div>
  );
}
